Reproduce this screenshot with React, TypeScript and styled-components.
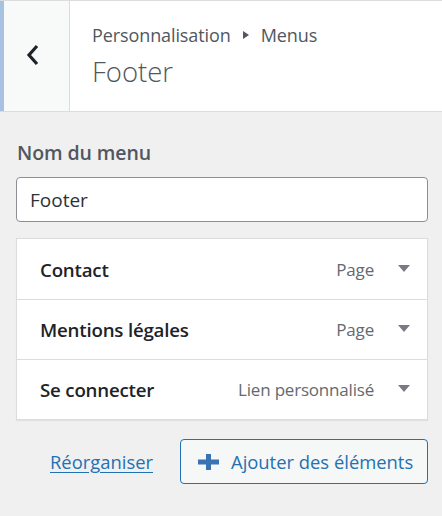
import React from "react";
import styled, { createGlobalStyle } from "styled-components";

interface MenuItem {
  id: number;
  title: string;
  type: string;
}

const items: MenuItem[] = [
  { id: 1, title: "Contact", type: "Page" },
  { id: 2, title: "Mentions légales", type: "Page" },
  { id: 3, title: "Se connecter", type: "Lien personnalisé" },
];

const GlobalStyle = createGlobalStyle`
  * { box-sizing: border-box; }
  body {
    margin: 0;
    background: #f0f0f1;
    font-family: "Open Sans", "Noto Sans", sans-serif;
    color: #1d2327;
  }
`;

const Header = styled.div`
  display: flex;
  height: 112px;
  background: #fff;
  border-top: 1px solid #dcdcde;
  border-bottom: 1px solid #dcdcde;
`;

const BackButton = styled.button`
  width: 70px;
  flex-shrink: 0;
  display: flex;
  align-items: center;
  justify-content: center;
  padding: 0 8px 2px 0;
  background: #f8fafa;
  border: 0;
  border-left: 4px solid #a7c2e0;
  border-right: 1px solid #dcdcde;
  cursor: pointer;
`;

const TitleBlock = styled.div`
  display: flex;
  flex-direction: column;
  padding: 22px 0 0 22px;
`;

const Breadcrumb = styled.div`
  display: flex;
  align-items: center;
  font-size: 18px;
  line-height: 24px;
  color: #50575e;
  letter-spacing: -0.1px;
`;

const Caret = styled.span`
  display: inline-block;
  width: 0;
  height: 0;
  margin: 0 12px 0 12px;
  border-top: 4px solid transparent;
  border-bottom: 4px solid transparent;
  border-left: 6px solid #50575e;
`;

const Title = styled.div`
  margin-top: 7px;
  font-size: 27.5px;
  font-weight: 300;
  line-height: 36px;
  color: #50575e;
`;

const Body = styled.div`
  padding: 28px 14px 0 16px;
`;

const Label = styled.label`
  display: block;
  font-size: 19.5px;
  font-weight: 600;
  line-height: 26px;
  color: #50575e;
  margin-left: 1px;
  letter-spacing: -0.1px;
`;

const NameInput = styled.input`
  display: block;
  width: 100%;
  height: 45px;
  margin-top: 11px;
  padding: 0 13px;
  font-family: inherit;
  font-size: 19px;
  color: #2c3338;
  background: #fff;
  border: 1px solid #8c8f94;
  border-radius: 4px;
  outline: none;
`;

const ItemList = styled.ul`
  list-style: none;
  margin: 16px 0 0;
  padding: 0;
  background: #fff;
  border: 1px solid #dcdcde;
  box-shadow: 0 1px 1px rgba(0, 0, 0, 0.06);
`;

const ItemRow = styled.li`
  display: flex;
  align-items: center;
  height: 60px;
  padding: 0 17px 0 23px;
  & + & {
    border-top: 1px solid #dcdcde;
  }
`;

const ItemTitle = styled.span`
  flex: 1;
  font-size: 18.7px;
  font-weight: 600;
  color: #1d2327;
  letter-spacing: -0.2px;
`;

const ItemType = styled.span`
  font-size: 17px;
  color: #646970;
  letter-spacing: -0.2px;
`;

const Toggle = styled.span`
  width: 0;
  height: 0;
  margin-left: 24px;
  border-left: 6px solid transparent;
  border-right: 6px solid transparent;
  border-top: 7px solid #787c82;
  transform: translateY(-1px);
`;

const Actions = styled.div`
  display: flex;
  align-items: center;
  justify-content: flex-end;
  gap: 27px;
  margin-top: 19px;
`;

const ReorderLink = styled.a`
  font-size: 18.4px;
  color: #2271b1;
  text-decoration: underline;
  text-underline-offset: 3px;
  cursor: pointer;
`;

const AddButton = styled.button`
  display: flex;
  align-items: center;
  gap: 12px;
  height: 45px;
  width: 248px;
  padding: 0 0 0 17px;
  font-family: inherit;
  font-size: 18.4px;
  color: #2271b1;
  background: #f6f7f7;
  border: 1px solid #2271b1;
  border-radius: 4px;
  cursor: pointer;
`;

const App: React.FC = () => {
  return (
    <>
      <GlobalStyle />
      <Header>
        <BackButton aria-label="Retour">
          <svg width="14" height="22" viewBox="0 0 14 22">
            <polyline
              points="11,2 3,11 11,20"
              fill="none"
              stroke="#1d2327"
              strokeWidth="3.2"
            />
          </svg>
        </BackButton>
        <TitleBlock>
          <Breadcrumb>
            Personnalisation
            <Caret />
            Menus
          </Breadcrumb>
          <Title>Footer</Title>
        </TitleBlock>
      </Header>
      <Body>
        <Label htmlFor="menu-name">Nom du menu</Label>
        <NameInput id="menu-name" defaultValue="Footer" />
        <ItemList>
          {items.map((item) => (
            <ItemRow key={item.id}>
              <ItemTitle>{item.title}</ItemTitle>
              <ItemType>{item.type}</ItemType>
              <Toggle />
            </ItemRow>
          ))}
        </ItemList>
        <Actions>
          <ReorderLink>Réorganiser</ReorderLink>
          <AddButton>
            <svg width="21" height="16" viewBox="0 0 21 16">
              <rect x="0" y="5.5" width="21" height="5" fill="#3a73b3" />
              <rect x="8" y="0" width="5" height="16" fill="#3a73b3" />
            </svg>
            Ajouter des éléments
          </AddButton>
        </Actions>
      </Body>
    </>
  );
};

export default App;
